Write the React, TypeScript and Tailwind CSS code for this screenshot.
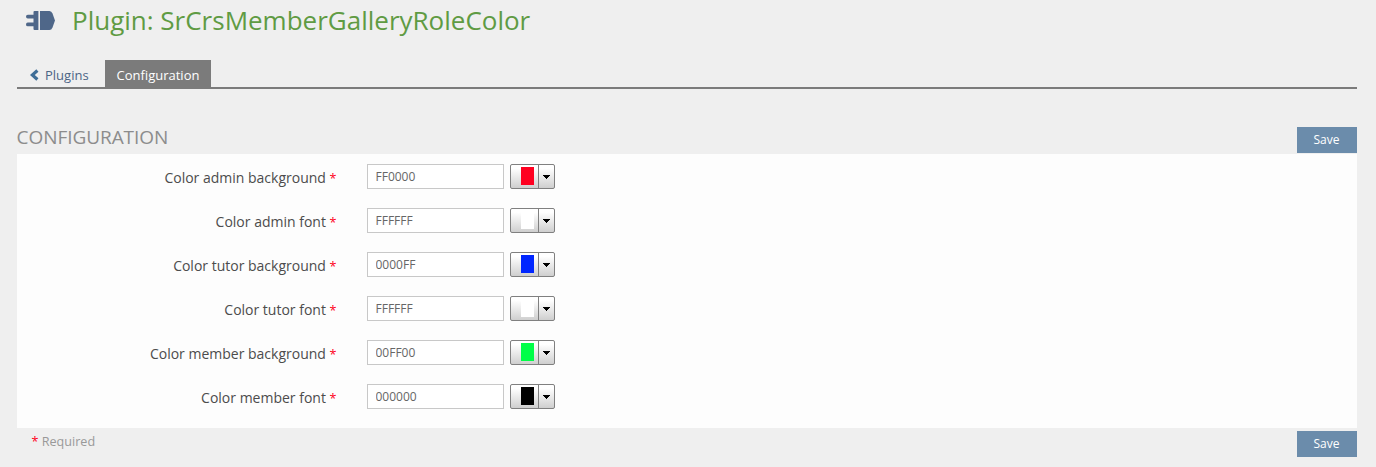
import React from "react";

type Field = { label: string; value: string; swatch: string };

const fields: Field[] = [
  { label: "Color admin background", value: "FF0000", swatch: "bg-[#ff0020]" },
  { label: "Color admin font", value: "FFFFFF", swatch: "bg-white" },
  { label: "Color tutor background", value: "0000FF", swatch: "bg-[#0026ff]" },
  { label: "Color tutor font", value: "FFFFFF", swatch: "bg-white" },
  { label: "Color member background", value: "00FF00", swatch: "bg-[#00ff48]" },
  { label: "Color member font", value: "000000", swatch: "bg-black" },
];

function PlugIcon() {
  return (
    <svg className="block h-[21px] w-[30px]" viewBox="0 0 30 21" fill="#4f6789">
      <path d="M8.5 1 H12.4 V20 H8.5 Q7.5 20 7.5 19 V16.3 H1.8 Q0 16.3 0 14.4 Q0 12.6 1.8 12.6 H7.5 V8.4 H1.8 Q0 8.4 0 6.5 Q0 4.7 1.8 4.7 H7.5 V2 Q7.5 1 8.5 1 Z" />
      <path d="M14 1 H23.5 Q25.5 1 26.5 3.5 L29 10.5 L26.5 17.5 Q25.5 20 23.5 20 H14 Z" />
    </svg>
  );
}

function SaveButton() {
  return (
    <button className="h-[26px] w-[60px] shrink-0 bg-[#6b8cab] pr-[1px] text-[12px] leading-[26px] text-white">
      Save
    </button>
  );
}

function ColorPicker({ swatch }: { swatch: string }) {
  return (
    <button className="ml-[6px] flex h-[25px] w-[45px] rounded-[2px] border border-[#808080] bg-linear-to-b from-white from-15% to-[#cfcfcf]">
      <span className="flex h-full w-[28px] justify-end border-r border-[#808080] pt-[2px] pr-[4px]">
        <span className={`block h-[18px] w-[13px] ${swatch}`} />
      </span>
      <svg className="mt-[10px] ml-[4px] block h-[4px] w-[7px]" viewBox="0 0 7 4" shapeRendering="crispEdges">
        <path d="M0 0H7V1H6V2H5V3H4V4H3V3H2V2H1V1H0Z" />
      </svg>
    </button>
  );
}

export default function App() {
  return (
    <div className="h-[467px] w-full overflow-hidden bg-[#efefef] pr-[19px] pl-[17px] font-['Open_Sans',sans-serif]">
      <header className="flex h-[60px] items-start">
        <div className="mt-[10px] ml-[9px]">
          <PlugIcon />
        </div>
        <h1 className="mt-[2px] ml-[16px] text-[26px] leading-[36px] whitespace-nowrap text-[#5f9b43]">
          Plugin: SrCrsMemberGalleryRoleColor
        </h1>
      </header>

      <nav className="flex h-[29px] border-b-2 border-[#7b7b7b] text-[13px] leading-[30px]">
        <a className="flex w-[88px] items-start pl-[13px] text-[#4c6586]">
          <svg className="mt-[9px] mr-[6px] block h-[12px] w-[9px]" viewBox="0 0 9 12">
            <path d="M7.4 1.5 L2.3 6 L7.4 10.5" fill="none" stroke="#3f6e97" strokeWidth="3.2" />
          </svg>
          Plugins
        </a>
        <a className="h-[27px] w-[106px] bg-[#7b7b7b] text-center text-white">Configuration</a>
      </nav>

      <main>
        <div className="flex h-[65px] items-start justify-between pt-[38px]">
          <h2 className="-mt-[2px] -ml-[0.5px] text-[19px] leading-[24px] tracking-[-0.05px] text-[#8c8c8c]">
            CONFIGURATION
          </h2>
          <SaveButton />
        </div>
        <form className="h-[274px] bg-[#fdfdfd] pt-[10px]">
          {fields.map((field) => (
            <div key={field.label} className="flex h-[44px] items-start">
              <label className="mr-[30.5px] w-[319.5px] text-right text-[14px] leading-[28px] text-[#4c4c4c]">
                {field.label} <span className="text-[12.6px] text-[#ff0020]">*</span>
              </label>
              <input
                className="h-[25px] w-[137px] border border-[#c8c8c8] bg-white px-[7.5px] text-[12px] text-[#666] outline-none"
                defaultValue={field.value}
              />
              <ColorPicker swatch={field.swatch} />
            </div>
          ))}
        </form>
        <div className="flex items-start justify-between pt-[3px]">
          <p className="ml-[14.5px] text-[12.6px] leading-[21px] text-[#999]">
            <span className="text-[#ff0020]">*</span> Required
          </p>
          <SaveButton />
        </div>
      </main>
    </div>
  );
}
